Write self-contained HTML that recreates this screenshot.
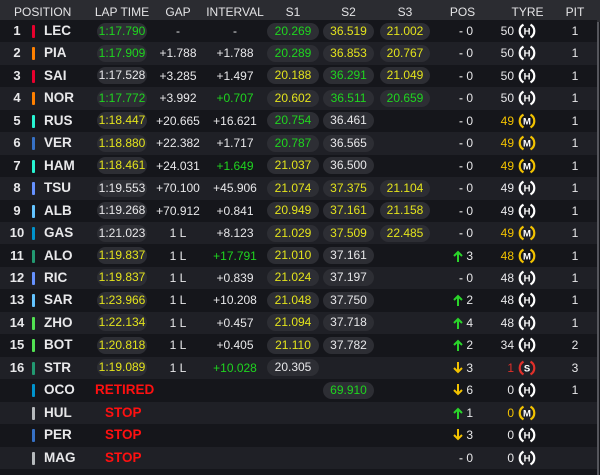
<!DOCTYPE html>
<html><head><meta charset="utf-8"><style>
*{margin:0;padding:0;box-sizing:border-box}
body{width:600px;height:475px;overflow:hidden;background:#15161b;font-family:"Liberation Sans",sans-serif;color:#e8e8ea;position:relative}
.hd{position:absolute;left:0;top:0;width:600px;height:22px;background:#2b2c31;font-size:12px;color:#e4e4e6}
.hd span{position:absolute;top:5px;text-align:center}
.r{position:absolute;left:0;width:597px;height:22.45px;font-size:12px}
.r:nth-child(even){background:#1f2026}
.r:nth-child(odd){background:#15161b}
.r span{position:absolute;top:0;line-height:22px;white-space:nowrap}
.p{left:2px;width:30px;text-align:center;font-weight:bold;font-size:13px}
.b{left:32px;top:5px!important;width:3px;height:13px;border-radius:1px}
.n{left:44px;font-weight:bold;font-size:13.5px}
.pl{background:#2d2e34;border-radius:9px;height:17px;top:2.5px!important;line-height:17px!important;text-align:center}
.lt{left:97px;width:50px}
.g{left:150px;width:56px;text-align:center}
.iv{left:205px;width:60px;text-align:center}
.s1{left:267px;width:52px}
.s2{left:323px;width:51px}
.s3{left:380px;width:50px}
.ar{left:455px;width:12px;text-align:center;font-weight:bold}
.ar svg{position:absolute;left:-2px;top:5px}
.pn{left:463px;width:10px;text-align:right}
.tn{left:494px;width:20px;text-align:right}
.ty{left:518px;top:2px!important}
.pit{left:565px;width:20px;text-align:center}
.G{color:#1fd51f}.Y{color:#e3e31c}.O{color:#f2c200}.R{color:#ff1010;font-weight:bold;font-size:13.5px}.RD{color:#e0302a}
.ds{color:#bbb}
svg text{font-family:"Liberation Sans",sans-serif;font-weight:bold;font-size:9.5px}
</style></head><body>
<svg width="0" height="0" style="position:absolute"><defs>
<g id="arc"><path d="M5.5,2.6 A7.3,7.3 0 0 0 5.5,15.4" fill="none" stroke-width="2.2"/><path d="M12.5,2.6 A7.3,7.3 0 0 1 12.5,15.4" fill="none" stroke-width="2.2"/></g>
<g id="up"><path d="M5,12 V2 M1,6 L5,2 L9,6" fill="none" stroke="#2ad42a" stroke-width="2"/></g>
<g id="dn"><path d="M5,0 V10 M1,6 L5,10 L9,6" fill="none" stroke="#f2c200" stroke-width="2"/></g>
</defs></svg>
<div class="hd"><span style="left:14px">POSITION</span><span style="left:92px;width:60px">LAP TIME</span><span style="left:153px;width:50px">GAP</span><span style="left:205px;width:60px">INTERVAL</span><span style="left:267px;width:52px">S1</span><span style="left:323px;width:51px">S2</span><span style="left:380px;width:50px">S3</span><span style="left:445px;width:35px">POS</span><span style="left:505px;width:45px">TYRE</span><span style="left:560px;width:30px">PIT</span></div>
<div style="position:absolute;left:0;top:20px;width:597px">
<div class="r" style="top:0"><span class="p">1</span><span class="b" style="background:#e8002d"></span><span class="n">LEC</span><span class="pl lt G">1:17.790</span><span class="g">-</span><span class="iv">-</span><span class="pl s1 G">20.269</span><span class="pl s2 Y">36.519</span><span class="pl s3 Y">21.002</span><span class="ar ds">-</span><span class="pn">0</span><span class="tn">50</span><span class="ty"><svg width="18" height="18"><use href="#arc" stroke="#fff"/><text x="9" y="12.5" text-anchor="middle" fill="#fff">H</text></svg></span><span class="pit">1</span></div>
<div class="r" style="top:22.45px"><span class="p">2</span><span class="b" style="background:#ff8000"></span><span class="n">PIA</span><span class="pl lt G">1:17.909</span><span class="g">+1.788</span><span class="iv">+1.788</span><span class="pl s1 G">20.289</span><span class="pl s2 Y">36.853</span><span class="pl s3 Y">20.767</span><span class="ar ds">-</span><span class="pn">0</span><span class="tn">50</span><span class="ty"><svg width="18" height="18"><use href="#arc" stroke="#fff"/><text x="9" y="12.5" text-anchor="middle" fill="#fff">H</text></svg></span><span class="pit">1</span></div>
<div class="r" style="top:44.9px"><span class="p">3</span><span class="b" style="background:#e8002d"></span><span class="n">SAI</span><span class="pl lt">1:17.528</span><span class="g">+3.285</span><span class="iv">+1.497</span><span class="pl s1 Y">20.188</span><span class="pl s2 G">36.291</span><span class="pl s3 Y">21.049</span><span class="ar ds">-</span><span class="pn">0</span><span class="tn">50</span><span class="ty"><svg width="18" height="18"><use href="#arc" stroke="#fff"/><text x="9" y="12.5" text-anchor="middle" fill="#fff">H</text></svg></span><span class="pit">1</span></div>
<div class="r" style="top:67.35px"><span class="p">4</span><span class="b" style="background:#ff8000"></span><span class="n">NOR</span><span class="pl lt G">1:17.772</span><span class="g">+3.992</span><span class="iv G">+0.707</span><span class="pl s1 Y">20.602</span><span class="pl s2 G">36.511</span><span class="pl s3 G">20.659</span><span class="ar ds">-</span><span class="pn">0</span><span class="tn">50</span><span class="ty"><svg width="18" height="18"><use href="#arc" stroke="#fff"/><text x="9" y="12.5" text-anchor="middle" fill="#fff">H</text></svg></span><span class="pit">1</span></div>
<div class="r" style="top:89.8px"><span class="p">5</span><span class="b" style="background:#27f4d2"></span><span class="n">RUS</span><span class="pl lt Y">1:18.447</span><span class="g">+20.665</span><span class="iv">+16.621</span><span class="pl s1 G">20.754</span><span class="pl s2">36.461</span><span class="ar ds">-</span><span class="pn">0</span><span class="tn O">49</span><span class="ty"><svg width="18" height="18"><use href="#arc" stroke="#f2c200"/><text x="9" y="12.5" text-anchor="middle" fill="#fff">M</text></svg></span><span class="pit">1</span></div>
<div class="r" style="top:112.25px"><span class="p">6</span><span class="b" style="background:#3671c6"></span><span class="n">VER</span><span class="pl lt Y">1:18.880</span><span class="g">+22.382</span><span class="iv">+1.717</span><span class="pl s1 G">20.787</span><span class="pl s2">36.565</span><span class="ar ds">-</span><span class="pn">0</span><span class="tn O">49</span><span class="ty"><svg width="18" height="18"><use href="#arc" stroke="#f2c200"/><text x="9" y="12.5" text-anchor="middle" fill="#fff">M</text></svg></span><span class="pit">1</span></div>
<div class="r" style="top:134.7px"><span class="p">7</span><span class="b" style="background:#27f4d2"></span><span class="n">HAM</span><span class="pl lt Y">1:18.461</span><span class="g">+24.031</span><span class="iv G">+1.649</span><span class="pl s1 Y">21.037</span><span class="pl s2">36.500</span><span class="ar ds">-</span><span class="pn">0</span><span class="tn O">49</span><span class="ty"><svg width="18" height="18"><use href="#arc" stroke="#f2c200"/><text x="9" y="12.5" text-anchor="middle" fill="#fff">M</text></svg></span><span class="pit">1</span></div>
<div class="r" style="top:157.15px"><span class="p">8</span><span class="b" style="background:#6692ff"></span><span class="n">TSU</span><span class="pl lt">1:19.553</span><span class="g">+70.100</span><span class="iv">+45.906</span><span class="pl s1 Y">21.074</span><span class="pl s2 Y">37.375</span><span class="pl s3 Y">21.104</span><span class="ar ds">-</span><span class="pn">0</span><span class="tn">49</span><span class="ty"><svg width="18" height="18"><use href="#arc" stroke="#fff"/><text x="9" y="12.5" text-anchor="middle" fill="#fff">H</text></svg></span><span class="pit">1</span></div>
<div class="r" style="top:179.6px"><span class="p">9</span><span class="b" style="background:#64c4ff"></span><span class="n">ALB</span><span class="pl lt">1:19.268</span><span class="g">+70.912</span><span class="iv">+0.841</span><span class="pl s1 Y">20.949</span><span class="pl s2 Y">37.161</span><span class="pl s3 Y">21.158</span><span class="ar ds">-</span><span class="pn">0</span><span class="tn">49</span><span class="ty"><svg width="18" height="18"><use href="#arc" stroke="#fff"/><text x="9" y="12.5" text-anchor="middle" fill="#fff">H</text></svg></span><span class="pit">1</span></div>
<div class="r" style="top:202.05px"><span class="p">10</span><span class="b" style="background:#0093cc"></span><span class="n">GAS</span><span class="pl lt">1:21.023</span><span class="g">1 L</span><span class="iv">+8.123</span><span class="pl s1 Y">21.029</span><span class="pl s2 Y">37.509</span><span class="pl s3 Y">22.485</span><span class="ar ds">-</span><span class="pn">0</span><span class="tn O">49</span><span class="ty"><svg width="18" height="18"><use href="#arc" stroke="#f2c200"/><text x="9" y="12.5" text-anchor="middle" fill="#fff">M</text></svg></span><span class="pit">1</span></div>
<div class="r" style="top:224.5px"><span class="p">11</span><span class="b" style="background:#229971"></span><span class="n">ALO</span><span class="pl lt Y">1:19.837</span><span class="g">1 L</span><span class="iv G">+17.791</span><span class="pl s1 Y">21.010</span><span class="pl s2">37.161</span><span class="ar"><svg width="10" height="12"><use href="#up"/></svg></span><span class="pn">3</span><span class="tn O">48</span><span class="ty"><svg width="18" height="18"><use href="#arc" stroke="#f2c200"/><text x="9" y="12.5" text-anchor="middle" fill="#fff">M</text></svg></span><span class="pit">1</span></div>
<div class="r" style="top:246.95px"><span class="p">12</span><span class="b" style="background:#6692ff"></span><span class="n">RIC</span><span class="pl lt Y">1:19.837</span><span class="g">1 L</span><span class="iv">+0.839</span><span class="pl s1 Y">21.024</span><span class="pl s2">37.197</span><span class="ar ds">-</span><span class="pn">0</span><span class="tn">48</span><span class="ty"><svg width="18" height="18"><use href="#arc" stroke="#fff"/><text x="9" y="12.5" text-anchor="middle" fill="#fff">H</text></svg></span><span class="pit">1</span></div>
<div class="r" style="top:269.4px"><span class="p">13</span><span class="b" style="background:#64c4ff"></span><span class="n">SAR</span><span class="pl lt Y">1:23.966</span><span class="g">1 L</span><span class="iv">+10.208</span><span class="pl s1 Y">21.048</span><span class="pl s2">37.750</span><span class="ar"><svg width="10" height="12"><use href="#up"/></svg></span><span class="pn">2</span><span class="tn">48</span><span class="ty"><svg width="18" height="18"><use href="#arc" stroke="#fff"/><text x="9" y="12.5" text-anchor="middle" fill="#fff">H</text></svg></span><span class="pit">1</span></div>
<div class="r" style="top:291.85px"><span class="p">14</span><span class="b" style="background:#52e252"></span><span class="n">ZHO</span><span class="pl lt Y">1:22.134</span><span class="g">1 L</span><span class="iv">+0.457</span><span class="pl s1 Y">21.094</span><span class="pl s2">37.718</span><span class="ar"><svg width="10" height="12"><use href="#up"/></svg></span><span class="pn">4</span><span class="tn">48</span><span class="ty"><svg width="18" height="18"><use href="#arc" stroke="#fff"/><text x="9" y="12.5" text-anchor="middle" fill="#fff">H</text></svg></span><span class="pit">1</span></div>
<div class="r" style="top:314.3px"><span class="p">15</span><span class="b" style="background:#52e252"></span><span class="n">BOT</span><span class="pl lt Y">1:20.818</span><span class="g">1 L</span><span class="iv">+0.405</span><span class="pl s1 Y">21.110</span><span class="pl s2">37.782</span><span class="ar"><svg width="10" height="12"><use href="#up"/></svg></span><span class="pn">2</span><span class="tn">34</span><span class="ty"><svg width="18" height="18"><use href="#arc" stroke="#fff"/><text x="9" y="12.5" text-anchor="middle" fill="#fff">H</text></svg></span><span class="pit">2</span></div>
<div class="r" style="top:336.75px"><span class="p">16</span><span class="b" style="background:#229971"></span><span class="n">STR</span><span class="pl lt Y">1:19.089</span><span class="g">1 L</span><span class="iv G">+10.028</span><span class="pl s1">20.305</span><span class="ar"><svg width="10" height="12"><use href="#dn"/></svg></span><span class="pn">3</span><span class="tn RD">1</span><span class="ty"><svg width="18" height="18"><use href="#arc" stroke="#e0302a"/><text x="9" y="12.5" text-anchor="middle" fill="#fff">S</text></svg></span><span class="pit">3</span></div>
<div class="r" style="top:359.2px"><span class="b" style="background:#0093cc"></span><span class="n">OCO</span><span class="R" style="left:95px">RETIRED</span><span class="pl s2 G">69.910</span><span class="ar"><svg width="10" height="12"><use href="#dn"/></svg></span><span class="pn">6</span><span class="tn">0</span><span class="ty"><svg width="18" height="18"><use href="#arc" stroke="#fff"/><text x="9" y="12.5" text-anchor="middle" fill="#fff">H</text></svg></span><span class="pit">1</span></div>
<div class="r" style="top:381.65px"><span class="b" style="background:#b6babd"></span><span class="n">HUL</span><span class="R" style="left:105px">STOP</span><span class="ar"><svg width="10" height="12"><use href="#up"/></svg></span><span class="pn">1</span><span class="tn O">0</span><span class="ty"><svg width="18" height="18"><use href="#arc" stroke="#f2c200"/><text x="9" y="12.5" text-anchor="middle" fill="#fff">M</text></svg></span></div>
<div class="r" style="top:404.1px"><span class="b" style="background:#3671c6"></span><span class="n">PER</span><span class="R" style="left:105px">STOP</span><span class="ar"><svg width="10" height="12"><use href="#dn"/></svg></span><span class="pn">3</span><span class="tn">0</span><span class="ty"><svg width="18" height="18"><use href="#arc" stroke="#fff"/><text x="9" y="12.5" text-anchor="middle" fill="#fff">H</text></svg></span></div>
<div class="r" style="top:426.55px"><span class="b" style="background:#b6babd"></span><span class="n">MAG</span><span class="R" style="left:105px">STOP</span><span class="ar ds">-</span><span class="pn">0</span><span class="tn">0</span><span class="ty"><svg width="18" height="18"><use href="#arc" stroke="#fff"/><text x="9" y="12.5" text-anchor="middle" fill="#fff">H</text></svg></span></div>
</div>
<div style="position:absolute;left:597px;top:22px;width:2px;height:453px;background:#55565c"></div>
</body></html>
